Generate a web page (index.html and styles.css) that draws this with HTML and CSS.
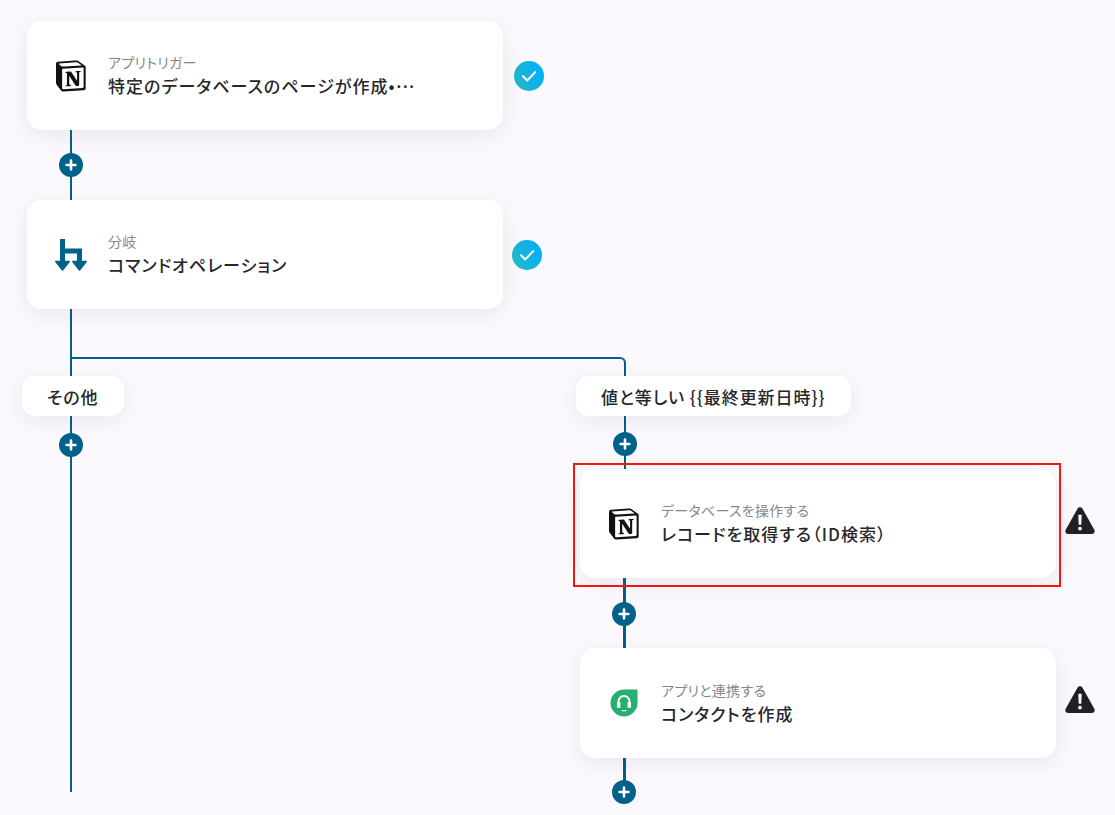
FILE: index.html
```html
<!DOCTYPE html>
<html lang="ja">
<head>
<meta charset="utf-8">
<title>フロー</title>
<link rel="stylesheet" href="styles.css">
</head>
<body>
<svg width="0" height="0" class="defs">
  <defs>
    <symbol id="notion" viewBox="0 0 100 100">
      <path fill="#fff" d="M6.017 4.313l55.333 -4.087c6.797 -0.583 8.543 -0.19 12.817 2.917l17.663 12.443c2.913 2.14 3.883 2.723 3.883 5.053v68.243c0 4.277 -1.553 6.807 -6.99 7.193L24.467 99.967c-4.08 0.193 -6.023 -0.39 -8.16 -3.113L3.3 79.94c-2.333 -3.113 -3.3 -5.443 -3.3 -8.167V11.113c0 -3.497 1.553 -6.413 6.017 -6.8z"/>
      <path fill="#111" fill-rule="evenodd" d="M61.35 0.227l-55.333 4.087C1.553 4.7 0 7.617 0 11.113v60.66c0 2.723 0.967 5.053 3.3 8.167l13.007 16.913c2.137 2.723 4.08 3.307 8.16 3.113l64.257 -3.89c5.433 -0.387 6.99 -2.917 6.99 -7.193V20.64c0 -2.21 -0.873 -2.847 -3.443 -4.733L74.167 3.143c-4.273 -3.107 -6.02 -3.5 -12.817 -2.917zM25.92 19.523c-5.247 0.353 -6.437 0.433 -9.417 -1.99L8.927 11.507c-0.77 -0.78 -0.383 -1.753 1.557 -1.947l53.193 -3.887c4.467 -0.39 6.793 1.167 8.54 2.527l9.123 6.61c0.39 0.197 1.36 1.36 0.193 1.36l-54.933 3.307 -0.68 0.047zM19.803 88.3V30.367c0 -2.53 0.777 -3.697 3.103 -3.893L86 22.78c2.14 -0.193 3.107 1.167 3.107 3.693v57.547c0 2.53 -0.39 4.67 -3.883 4.863l-60.377 3.5c-3.493 0.193 -5.043 -0.777 -5.043 -3.083zm59.6 -54.827c0.387 1.75 0 3.5 -1.75 3.7l-2.91 0.577v42.773c-2.527 1.36 -4.853 2.137 -6.797 2.137 -3.107 0 -3.883 -0.973 -6.21 -3.887l-19.03 -29.94v28.967l6.02 1.363s0 3.5 -4.857 3.5l-13.39 0.777c-0.39 -0.78 0 -2.723 1.357 -3.11l3.497 -0.97v-38.3L30.48 40.667c-0.39 -1.75 0.58 -4.277 3.3 -4.473l14.367 -0.967 19.8 30.327v-26.83l-5.047 -0.58c-0.39 -2.143 1.163 -3.7 3.103 -3.89l13.4 -0.78z"/>
    </symbol>
    <symbol id="plus" viewBox="0 0 24 24">
      <circle cx="12" cy="12" r="12" fill="#00618a"/>
      <path d="M12 7.600v8.800M7.600 12h8.800" stroke="#fff" stroke-width="2.600" stroke-linecap="round"/>
    </symbol>
    <symbol id="warn" viewBox="0 0 30 28">
      <path fill="#212125" fill-rule="evenodd" d="M12.600 1.600c1.100-1.900 3.700-1.900 4.800 0l11.900 21.200c1.100 1.900-.3 4.200-2.400 4.200H3.100C1 27-.4 24.700.7 22.800zM13.300 7.800l.4 10h2.600l.4-10zM15 19.700a1.900 1.900 0 1 0 0 3.800 1.900 1.900 0 0 0 0-3.800z"/>
    </symbol>
    <linearGradient id="checkfill" x1="0" y1="1" x2="1" y2="0.6">
      <stop offset="0" stop-color="#25b9bf"/>
      <stop offset="1" stop-color="#04b0f5"/>
    </linearGradient>
    <symbol id="check" viewBox="0 0 30 30">
      <circle cx="15" cy="15" r="15" fill="url(#checkfill)"/>
      <path d="M9 15.300l4.200 4.200 8-8.400" fill="none" stroke="#fff" stroke-width="2" stroke-linecap="round" stroke-linejoin="round"/>
    </symbol>
  </defs>
</svg>

<main class="canvas">
  <div class="line line-left"></div>
  <div class="line line-right"></div>
  <div class="line line-right-lower"></div>
  <div class="line-branch"></div>

  <article class="card card-trigger">
    <svg class="icon icon-notion"><use href="#notion"/></svg>
    <div class="card-text">
      <p class="card-sub">アプリトリガー</p>
      <p class="card-title">特定のデータベースのページが作成•<span class="dots">···</span></p>
    </div>
  </article>
  <svg class="status status-1"><use href="#check"/></svg>
  <svg class="add add-1"><use href="#plus"/></svg>

  <article class="card card-branch">
    <svg class="icon icon-branch" viewBox="0 0 32 32">
      <path fill="#00618a" d="M5 0h5v9.500h17V23h-5v-8.500H10V23H5z"/>
      <path fill="#00618a" stroke="#00618a" stroke-width="1.500" stroke-linejoin="round" d="M.8 22.500h13.400L7.500 31zM17.800 22.500h13.400L24.500 31z"/>
    </svg>
    <div class="card-text">
      <p class="card-sub">分岐</p>
      <p class="card-title">コマンドオペレーション</p>
    </div>
  </article>
  <svg class="status status-2"><use href="#check"/></svg>

  <div class="pill pill-other">その他</div>
  <div class="pill pill-value">値と等しい {{最終更新日時}}</div>
  <svg class="add add-2"><use href="#plus"/></svg>
  <svg class="add add-3"><use href="#plus"/></svg>

  <article class="card card-record">
    <svg class="icon icon-notion"><use href="#notion"/></svg>
    <div class="card-text">
      <p class="card-sub">データベースを操作する</p>
      <p class="card-title">レコードを取得する（ID検索）</p>
    </div>
  </article>
  <div class="highlight"></div>
  <svg class="status-warn warn-1"><use href="#warn"/></svg>
  <svg class="add add-4"><use href="#plus"/></svg>

  <article class="card card-contact">
    <svg class="icon icon-fresh" viewBox="0 0 28 28">
      <path fill="#25b06f" d="M14 .5h13.500V14A13.500 13.500 0 1 1 14 .5z"/>
      <path fill="none" stroke="#fff" stroke-width="2" d="M8.500 15v-2.500a5.500 5.500 0 0 1 11 0V15"/>
      <path fill="#fff" d="M7 13.200h3.400v5.600H7zM17.600 13.200H21v5.600h-3.400z"/>
      <path fill="#fff" d="M11.800 21h4.400v1.200h-4.400z"/>
    </svg>
    <div class="card-text">
      <p class="card-sub">アプリと連携する</p>
      <p class="card-title">コンタクトを作成</p>
    </div>
  </article>
  <svg class="status-warn warn-2"><use href="#warn"/></svg>
  <svg class="add add-5"><use href="#plus"/></svg>
</main>
</body>
</html>
```

FILE: styles.css
```css
* { box-sizing: border-box; }
html, body { margin: 0; padding: 0; }
body {
  background: #fbf9fd;
  font-family: "Noto Sans CJK JP", "Noto Sans", sans-serif;
  color: #27272b;
  overflow: hidden;
}
.defs { position: absolute; }
.canvas { position: relative; width: 1115px; height: 815px; overflow: hidden; }

.line { position: absolute; width: 2px; background: #00618a; }
.line-left { left: 70px; top: 130px; height: 662px; }
.line-right { left: 624px; top: 364px; height: 214px; }
.line-right-lower { left: 623px; top: 578px; width: 3px; height: 214px; }
.line-branch {
  position: absolute; left: 72px; top: 357px; width: 554px; height: 20px;
  border-top: 2px solid #00618a; border-right: 2px solid #00618a; border-top-right-radius: 6px;
}

.card {
  position: absolute; width: 476px; height: 109px;
  display: flex; align-items: center;
  background: #fff; border-radius: 15px;
  box-shadow: 0 5px 22px rgba(30, 30, 60, .08);
}
.card-trigger { left: 27px; top: 21px; }
.card-branch { left: 27px; top: 200px; }
.card-record { left: 580px; top: 469px; }
.card-contact { left: 580px; top: 648px; height: 110px; }

.icon { flex: none; width: 31px; height: 32px; margin-left: 29px; margin-right: 21px; }
.icon-branch { width: 32px; margin-left: 28px; }
.icon-fresh { margin-left: 30px; margin-right: 23px; width: 28px; height: 28px; }
.card-text { display: flex; flex-direction: column; gap: 2px; padding-bottom: 1px; min-width: 0; }
.card-sub { margin: 0; font-size: 14px; line-height: 20px; color: #87878b; font-feature-settings: "palt"; letter-spacing: .02em; }
.card-title { margin: 0; font-size: 17px; line-height: 24px; font-weight: 500; font-feature-settings: "palt"; letter-spacing: .062em; white-space: nowrap; }
.dots { letter-spacing: -.2em; margin-left: -.1em; }

.pill {
  position: absolute; top: 376px; height: 40px; padding: 0 25px;
  display: flex; align-items: center;
  background: #fff; border-radius: 13px;
  font-size: 17px; font-weight: 500; white-space: nowrap;
  font-feature-settings: "palt"; letter-spacing: .055em;
  box-shadow: 0 5px 22px rgba(30, 30, 60, .08);
}
.pill-other { left: 22px; width: 102px; }
.pill-value { left: 576px; width: 275px; }

.add { position: absolute; width: 24px; height: 24px; }
.add-1 { left: 59px; top: 153px; }
.add-2 { left: 59px; top: 433px; }
.add-3 { left: 613px; top: 432px; }
.add-4 { left: 612px; top: 602px; }
.add-5 { left: 612px; top: 780px; }

.status { position: absolute; width: 30px; height: 30px; }
.status-1 { left: 514px; top: 61px; }
.status-2 { left: 512px; top: 240px; }

.status-warn { position: absolute; width: 30px; height: 28px; }
.warn-1 { left: 1065px; top: 507px; }
.warn-2 { left: 1065px; top: 686px; }

.highlight {
  position: absolute; left: 573px; top: 463px; width: 488px; height: 124px;
  border: 2px solid #f5180a;
}
```
